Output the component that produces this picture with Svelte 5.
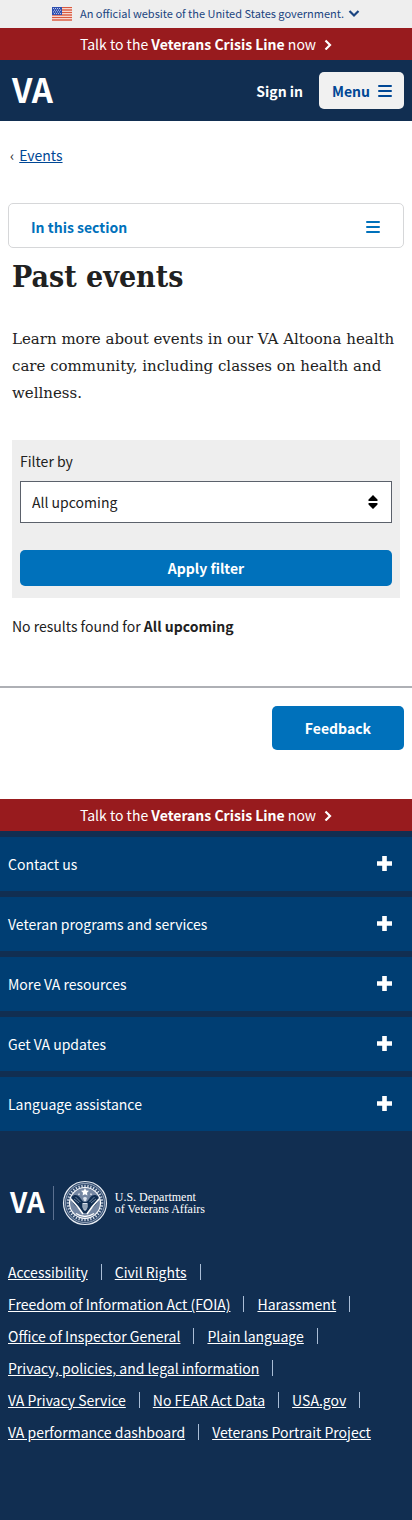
<script>
  const sections = ['Contact us', 'Veteran programs and services', 'More VA resources', 'Get VA updates', 'Language assistance'];
  const links = [
    'Accessibility', 'Civil Rights', 'Freedom of Information Act (FOIA)', 'Harassment',
    'Office of Inspector General', 'Plain language', 'Privacy, policies, and legal information',
    'VA Privacy Service', 'No FEAR Act Data', 'USA.gov', 'VA performance dashboard', 'Veterans Portrait Project'
  ];
  const ticks = Array.from({ length: 36 }, (_, i) => i * 10);
</script>

{#snippet crisis()}
  <button class="crisis" type="button">
    <span>Talk to the <b>Veterans Crisis Line</b> now</span>
    <svg width="8" height="12" viewBox="0 0 8 12" aria-hidden="true"><path d="M1.500 2.500 6 7l-4.500 4.500" fill="none" stroke="#fff" stroke-width="2.200" /></svg>
  </button>
{/snippet}

<div class="page">
  <header>
    <button class="official" type="button">
      <svg width="20" height="14" viewBox="0 0 20 14" aria-hidden="true">
        <path fill="#fff" d="M0 0h20v14H0z" />
        <path d="M0 .5h20M0 3h20M0 5.500h20M0 8h20M0 10.500h20M0 13h20" stroke="#d9593f" stroke-width="1.300" />
        <path fill="#2f4fb0" d="M0 0h10v8H0z" />
        <path d="M1 1.500h8M2 3.200h7M1 4.900h8M2 6.600h7" stroke="#fff" stroke-width=".8" stroke-dasharray=".9 1.100" />
      </svg>
      <span>An official website of the United States government.</span>
      <svg width="12" height="8" viewBox="0 0 12 8" aria-hidden="true"><path d="m1.500 1 4.500 4.500L10.500 1" fill="none" stroke="#1a4480" stroke-width="2.200" /></svg>
    </button>
    {@render crisis()}
    <div class="bar">
      <a class="logo" href="#home">VA</a>
      <button class="signin" type="button">Sign in</button>
      <button class="menu" type="button">
        Menu
        <svg width="14" height="12" viewBox="0 0 14 12" aria-hidden="true"><path d="M1 1h12M1 6h12M1 11h12" stroke="#004795" stroke-width="2" stroke-linecap="round" /></svg>
      </button>
    </div>
  </header>

  <main>
    <nav class="crumb"><span>‹</span><a href="#events">Events</a></nav>
    <button class="section" type="button">
      In this section
      <svg width="14" height="12" viewBox="0 0 14 12" aria-hidden="true"><path d="M1 1h12M1 6h12M1 11h12" stroke="#0071bb" stroke-width="2" stroke-linecap="round" /></svg>
    </button>
    <div class="content">
      <h1>Past events</h1>
      <p class="intro">Learn more about events in our VA Altoona health care community, including classes on health and wellness.</p>
      <form class="filter" onsubmit={(e) => e.preventDefault()}>
        <label for="when">Filter by</label>
        <div class="pick">
          <select id="when"><option>All upcoming</option></select>
          <svg width="10" height="14" viewBox="0 0 10 14" aria-hidden="true"><path d="M5 0 9.500 4.500Q10 6 9 6H1Q0 6 .5 4.500ZM5 14 .5 9.500Q0 8 1 8h8q1 0 .5 1.500Z" /></svg>
        </div>
        <button class="apply" type="submit">Apply filter</button>
      </form>
      <p class="none">No results found for <b>All upcoming</b></p>
    </div>
    <div class="feedback"><button type="button">Feedback</button></div>
  </main>

  <footer>
    {@render crisis()}
    <div class="rows">
      {#each sections as s}
        <button class="row" type="button">
          {s}
          <svg width="15" height="16" viewBox="0 0 15 16" aria-hidden="true"><path d="M7.500 0v15M0 7.500h15" stroke="#fff" stroke-width="4.600" /></svg>
        </button>
      {/each}
    </div>
    <a class="brand" href="#va">
      <span class="mark">VA</span>
      <span class="rule"></span>
      <svg width="46" height="46" viewBox="0 0 46 46" aria-hidden="true">
        <circle cx="23" cy="23" r="21.500" fill="#2e486b" stroke="#e6ebf2" stroke-width="1.200" />
        <circle cx="23" cy="23" r="19.600" fill="none" stroke="#b9c6d8" stroke-width=".7" />
        {#each ticks as t}
          <path d="M23 4.700v2.200" stroke="#dbe3ee" stroke-width="1.200" transform={`rotate(${t} 23 23)`} />
        {/each}
        <circle cx="23" cy="23" r="15.500" fill="#7486a2" stroke="#fff" stroke-width="1.100" />
        <path fill="#112e51" d="M9.500 17c3-3 6-2 8 0l3 4 1.500 1h2l1.500-1 3-4c2-2 5-3 8 0-.5 6-3 9-7 11l-3 5h-7l-3-5c-4-2-6.500-5-7-11Z" />
        <path d="m9 19 7 8 5 7M37 19l-7 8-5 7" fill="none" stroke="#fff" stroke-width="1.600" />
        <path d="m12 19 5 4M13.500 17l5 5M34 19l-5 4M32.500 17l-5 5" fill="none" stroke="#9aabc2" stroke-width=".7" />
        <path fill="#fff" d="m23 8 1.200 2.500 2.800.3-2 2 .4 2.700L23 14.200l-2.400 1.300.4-2.700-2-2 2.800-.3ZM17 13l1 1.500-2 .5ZM29 13l-1 1.500 2 .5Z" />
        <path fill="#dbe3ee" d="M20.500 23h5v4q0 2.500-2.500 4-2.500-1.500-2.500-4ZM21 18q2-2 4 0l-1 3h-2Z" />
        <path d="M21.800 24v5M23 24v6M24.200 24v5" stroke="#112e51" stroke-width=".5" />
        <path d="M14 33.500q9 6 18 0" fill="none" stroke="#fff" stroke-width="1.400" />
      </svg>
      <span class="dept">U.S. Department<br />of Veterans Affairs</span>
    </a>
    <ul>
      {#each links as l}<li><a href="#link">{l}</a></li>{/each}
    </ul>
  </footer>
</div>

<style>
  :global(body) { margin: 0; background: #112e51; }
  .page { background: #fff; color: #212121; font: 14px/24px 'Noto Sans CJK SC', 'Noto Sans', sans-serif; }
  button { font: inherit; border: 0; margin: 0; padding: 0; cursor: pointer; }
  svg { display: block; flex: none; }
  .official { display: flex; width: 100%; height: 28px; align-items: center; justify-content: center; background: #eee; color: #1a4480; font-size: 11px; }
  .official span { margin: 0 4px 0 8px; padding-bottom: 2px; }
  .crisis { display: flex; width: 100%; height: 32px; align-items: center; justify-content: center; gap: 8px; background: #981b1e; color: #fff; }
  .bar { display: flex; align-items: center; height: 61px; padding: 0 8px 0 12px; background: #112e51; }
  .logo { margin-right: auto; padding-bottom: 4px; color: #fff; font-size: 33px; font-weight: 700; text-decoration: none; }
  .signin { background: none; color: #fff; font-weight: 700; margin-right: 16px; }
  .menu { display: flex; align-items: center; gap: 8px; height: 37px; padding: 0 12px 0 13px; border-radius: 5px; background: #f1f1f1; color: #004795; font-weight: 700; }
  .crumb { display: flex; gap: 5px; padding: 22px 10px 0; height: 60px; }
  .crumb a { color: #004795; }
  .section { display: flex; align-items: center; justify-content: space-between; width: calc(100% - 16px); height: 45px; margin: 0 8px; padding: 2px 23px 0 22px; border: 1px solid #d6d7d9; border-radius: 5px; background: #fff; color: #0071bb; font-weight: 700; }
  .content { padding: 10px 12px 0; }
  h1 { margin: 0; font: 700 30px/38px 'DejaVu Serif Condensed', 'DejaVu Serif', serif; }
  .intro { margin: 30px 0 33px; font: 15px/27px 'DejaVu Serif', serif; }
  .filter { padding: 9px 8px 12px; background: #eee; }
  label { display: block; }
  .pick { display: grid; align-items: center; margin: 8px 0 27px; }
  .pick > * { grid-area: 1 / 1; }
  .pick svg { justify-self: end; margin-right: 14px; pointer-events: none; }
  select { appearance: none; width: 100%; height: 42px; padding: 0 32px 0 11px; border: 1px solid #5b616b; border-radius: 0; background: #fff; color: #212121; font: inherit; }
  .apply { display: block; width: 100%; height: 36px; }
  .apply, .feedback button { border-radius: 5px; background: #0071bb; color: #fff; font-weight: 700; }
  .none { margin: 16px 0 48px; }
  .feedback { display: flex; justify-content: flex-end; padding: 18px 8px 49px; border-top: 2px solid #aeb0b5; }
  .feedback button { height: 44px; padding: 0 33px; }
  footer { background: #112e51; color: #fff; padding-bottom: 72px; }
  .rows { display: grid; gap: 6px; padding-top: 6px; }
  .row { display: flex; align-items: center; justify-content: space-between; width: 100%; height: 54px; padding: 0 20px 0 8px; background: #003e73; color: #fff; }
  .brand { display: flex; align-items: center; width: max-content; margin: 49px 10px 30px; color: #fff; text-decoration: none; }
  .mark { padding-bottom: 4px; font-size: 28px; font-weight: 700; }
  .rule { width: 1px; height: 34px; margin: 0 8px; background: #5b7090; }
  .dept { margin-left: 7px; padding-bottom: 1px; font: 12px/12px 'Liberation Serif', serif; }
  ul { display: flex; flex-wrap: wrap; margin: 0; padding: 0 8px; list-style: none; line-height: 32px; }
  li { display: flex; align-items: center; white-space: nowrap; }
  li:not(:last-child)::after { content: ''; width: 1px; height: 16px; margin: 0 13px; background: #a9bdd6; }
  li a { color: #fff; }
</style>
